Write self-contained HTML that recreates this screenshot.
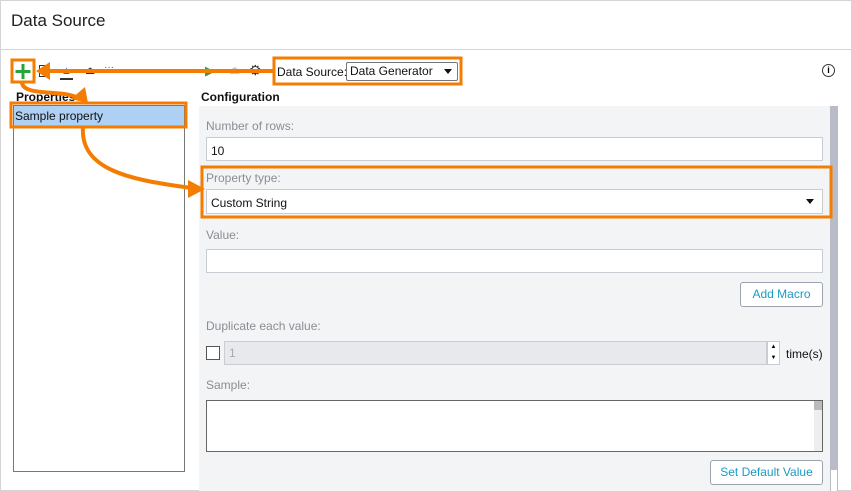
<!DOCTYPE html>
<html><head><style>
body{margin:0;width:852px;height:491px;overflow:hidden;background:#fff;font-family:"Liberation Sans",sans-serif;font-size:12px;position:relative}
.a{position:absolute}
.inp{position:absolute;background:#fff;border:1px solid #c9ccd3;box-sizing:border-box;font-size:12px;padding:6px 4px;color:#111}
.lbl{position:absolute;color:#8a8d94;font-size:12px}
.btn{position:absolute;border:1px solid #9aa3ae;border-radius:3px;background:#fff;color:#1a9bc4;font-size:12px;text-align:center;box-sizing:border-box;line-height:23px}
.tri{position:absolute;width:0;height:0;border-left:4px solid transparent;border-right:4px solid transparent;border-top:5px solid #111}
</style></head><body>
<div class="a" style="left:0;top:0;width:850px;height:489px;border:1px solid #d4d4d4"></div>
<div class="a" style="left:11px;top:11px;font-size:17px;color:#222">Data Source</div>
<div class="a" style="left:1px;top:49px;width:850px;height:1px;background:#d4d4d4"></div>
<div class="a" style="left:39px;top:65px;width:9px;height:10px;border:1px solid #333"></div>
<div class="a" style="left:60px;top:67px;width:13px;height:11px;border-bottom:2px solid #333;color:#1a6ec4;font-size:11px;text-align:center;line-height:8px">▲</div>
<div class="a" style="left:85px;top:64px;font-size:11px;color:#333">⏏</div>
<div class="a" style="left:104px;top:62px;font-size:10px;color:#555">···</div>
<div class="a" style="left:205px;top:63px;color:#2aa33a;font-size:13px">▶</div>
<div class="a" style="left:229px;top:63px;color:#ccc;font-size:12px">⏏</div>
<div class="a" style="left:249px;top:62px;color:#333;font-size:14px">⚙</div>
<div class="a" style="left:277px;top:65px;color:#111">Data Source:</div>
<div class="a" style="left:346px;top:62px;width:112px;height:19px;border:1px solid #777;border-radius:2px;box-sizing:border-box;padding:2px 3px;color:#111;line-height:13px">Data Generator<div class="tri" style="right:5px;top:6px"></div></div>
<div class="a" style="left:822px;top:64px;width:11px;height:11px;border:1px solid #333;border-radius:50%;font-size:9px;text-align:center;line-height:11px;font-weight:bold">i</div>
<div class="a" style="left:16px;top:90px;font-weight:bold;color:#111">Properties</div>
<div class="a" style="left:201px;top:90px;font-weight:bold;color:#111">Configuration</div>
<div class="a" style="left:13px;top:105px;width:172px;height:367px;border:1px solid #777;box-sizing:border-box"></div>
<div class="a" style="left:14px;top:106px;width:170px;height:21px;background:#aed0f4;padding:3px 1px;box-sizing:border-box;color:#111">Sample property</div>
<div class="a" style="left:199px;top:106px;width:631px;height:385px;background:#f3f4f6"></div>
<div class="a" style="left:830px;top:106px;width:8px;height:385px;background:#b8bcc6"></div>
<div class="a" style="left:831px;top:470px;width:6px;height:21px;background:#fff"></div>
<div class="lbl" style="left:206px;top:119px">Number of rows:</div>
<div class="inp" style="left:206px;top:137px;width:617px;height:24px">10</div>
<div class="lbl" style="left:206px;top:171px">Property type:</div>
<div class="inp" style="left:206px;top:189px;width:617px;height:25px;border-color:#ccc">Custom String<div class="tri" style="right:8px;top:9px"></div></div>
<div class="lbl" style="left:206px;top:228px">Value:</div>
<div class="inp" style="left:206px;top:249px;width:617px;height:24px"></div>
<div class="btn" style="left:740px;top:282px;width:83px;height:25px">Add Macro</div>
<div class="lbl" style="left:206px;top:319px">Duplicate each value:</div>
<div class="a" style="left:206px;top:346px;width:12px;height:12px;border:1px solid #555;background:#fff"></div>
<div class="inp" style="left:224px;top:341px;width:543px;height:24px;background:#e8e9ec;color:#aaa;padding:4px">1</div>
<div class="a" style="left:767px;top:341px;width:13px;height:24px;border:1px solid #c9ccd3;box-sizing:border-box;background:#fff;font-size:6px;text-align:center;line-height:11px">▲<br>▼</div>
<div class="a" style="left:786px;top:347px;color:#111">time(s)</div>
<div class="lbl" style="left:206px;top:378px">Sample:</div>
<div class="a" style="left:206px;top:400px;width:617px;height:52px;border:1px solid #666;background:#fff;box-sizing:border-box"></div>
<div class="a" style="left:814px;top:401px;width:8px;height:50px;background:#eee"></div>
<div class="a" style="left:814px;top:401px;width:8px;height:9px;background:#bbb"></div>
<div class="btn" style="left:710px;top:460px;width:113px;height:25px">Set Default Value</div>
<svg class="a" style="left:0;top:0" width="852" height="491">
<g fill="none" stroke="#f47c00" stroke-width="3">
<rect x="12" y="60" width="22" height="22"/>
<rect x="11" y="103" width="175" height="24"/>
<rect x="274" y="58" width="187" height="26"/>
<rect x="202" y="167" width="629" height="50"/>
</g>
<g fill="none" stroke="#f47c00" stroke-width="4">
<path d="M274 71 H46"/>
<path d="M22 82 C22 98 70 88 80 100"/>
<path d="M83 127 C80 170 130 180 192 188"/>
</g>
<g fill="#f47c00">
<path d="M36 71 L50 62 L50 80 Z"/>
<path d="M88 103 L71 99 L85 87 Z"/>
<path d="M205 189 L188 180 L188 198 Z"/>
</g>
<g stroke="#2aa33a" stroke-width="3"><path d="M23 64 V79 M15.5 71.5 H30.5"/></g>
</svg>
</body></html>
